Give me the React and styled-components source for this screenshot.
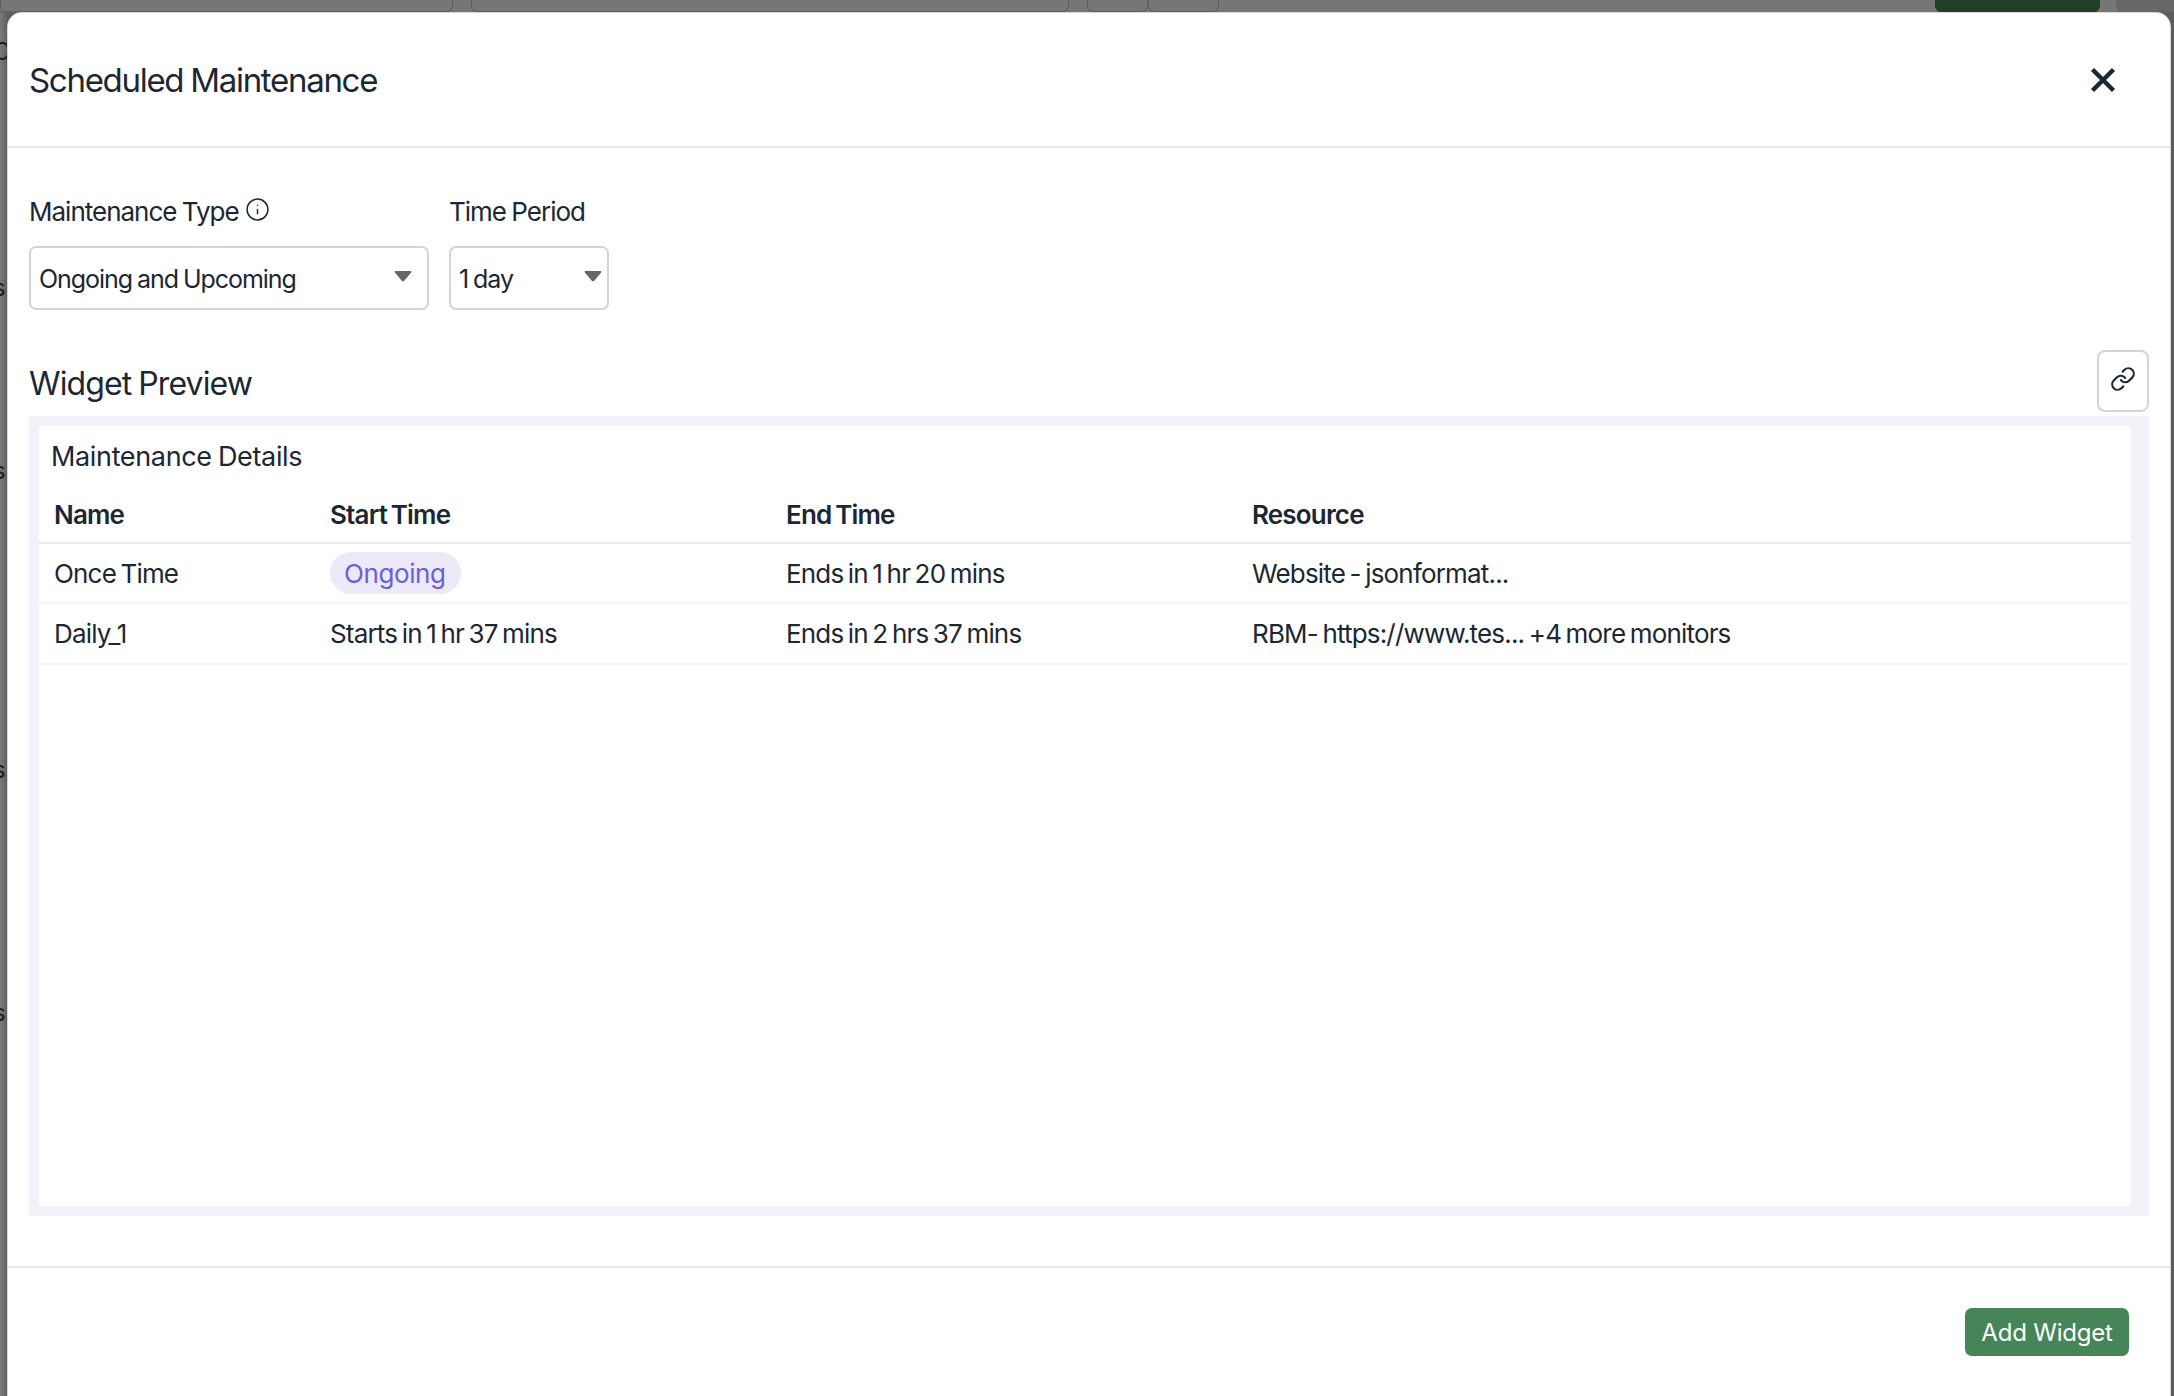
import styled, { createGlobalStyle } from "styled-components";
import { Info, Link } from "lucide-react";

const Global = createGlobalStyle`
  html, body {
    margin: 0;
    padding: 0;
    height: 100%;
    overflow: hidden;
  }
  body {
    font-family: Inter, "Noto Sans", sans-serif;
    color: #1c2733;
  }
`;

const Page = styled.div`
  position: relative;
  width: 2174px;
  height: 1396px;
  overflow: hidden;
  background: linear-gradient(90deg, #7a7a7a 0, #5c5c5c 8px);
`;

const TopStrip = styled.div`
  display: flex;
  height: 12px;
  background: #767676;
  border-bottom: 1px solid #606060;
`;

const BackField = styled.div`
  width: ${(p) => p.$w}px;
  margin-left: ${(p) => p.$ml}px;
  height: 12px;
  box-sizing: border-box;
  border: 1px solid #5f5f5f;
  border-top: none;
  border-radius: 0 0 6px 6px;
`;

const BackButton = styled.div`
  width: 165px;
  margin-left: ${(p) => p.$ml}px;
  height: 12px;
  background: #213f27;
  border-radius: 0 0 6px 6px;
`;

const BackGray = styled.div`
  flex: 1;
  margin-left: 16px;
  background: #676767;
  border-radius: 0 0 0 6px;
`;

const EdgeLetter = styled.span`
  position: absolute;
  left: -7px;
  top: ${(p) => p.$top}px;
  font-size: 24px;
  line-height: 24px;
  color: #1d1d1d;
`;

const Modal = styled.div`
  position: absolute;
  left: 8px;
  top: 13px;
  width: 2162px;
  height: 1400px;
  background: #fff;
  border-radius: 14px;
  box-shadow: 0 0 0 1px #d8d8d8;
  display: flex;
  flex-direction: column;
`;

const Header = styled.div`
  height: 135px;
  flex: none;
  box-sizing: border-box;
  border-bottom: 2px solid #e8e8ee;
  display: flex;
  align-items: center;
  justify-content: space-between;
  padding: 0 54px 0 21px;
`;

const Title = styled.h1`
  margin: 0;
  font-size: 33px;
  font-weight: 400;
  letter-spacing: -1.3px;
  word-spacing: -1px;
`;

const CloseButton = styled.button`
  border: none;
  background: none;
  padding: 0;
  width: 26px;
  height: 26px;
  display: flex;
  color: #1c2733;
`;

const Body = styled.div`
  flex: none;
  height: 1120px;
  box-sizing: border-box;
  border-bottom: 2px solid #e8e8ee;
  padding: 0 21px;
`;

const Filters = styled.div`
  display: flex;
  gap: 20px;
  padding-top: 47px;
`;

const FilterGroup = styled.div`
  display: flex;
  flex-direction: column;
  gap: 19px;
`;

const Label = styled.label`
  display: flex;
  align-items: center;
  gap: 6px;
  height: 32px;
  font-size: 26px;
  letter-spacing: -1px;
  word-spacing: -1px;
  svg {
    margin-top: -4px;
  }
`;

const Select = styled.div`
  width: ${(p) => p.$w}px;
  height: 64px;
  box-sizing: border-box;
  border: 2px solid #d3d5da;
  border-radius: 7px;
  padding: 2px ${(p) => p.$pr}px 0 8px;
  display: flex;
  align-items: center;
  justify-content: space-between;
  font-size: 25px;
  letter-spacing: -1.05px;
  word-spacing: -1px;
`;

const Arrow = styled.svg`
  width: 18px;
  height: 12px;
  margin-top: -6px;
  fill: #666;
`;

const PreviewHead = styled.div`
  display: flex;
  align-items: flex-end;
  justify-content: space-between;
  margin-top: 40px;
  height: 62px;
`;

const PreviewTitle = styled.h2`
  margin: 0 0 9px;
  font-size: 32px;
  font-weight: 400;
  letter-spacing: -0.9px;
  word-spacing: -1px;
`;

const LinkButton = styled.button`
  width: 52px;
  height: 62px;
  box-sizing: border-box;
  background: #fff;
  border: 2px solid #d3d5da;
  border-radius: 8px;
  padding: 0 0 4px;
  display: flex;
  align-items: center;
  justify-content: center;
  color: #1c2733;
`;

const Panel = styled.div`
  margin-top: 4px;
  height: 800px;
  box-sizing: border-box;
  background: #f3f2f8;
  padding: 10px 18px 10px 10px;
`;

const PanelInner = styled.div`
  height: 100%;
  background: #fff;
  border-radius: 3px;
`;

const PanelTitle = styled.div`
  height: 60px;
  padding-left: 12px;
  display: flex;
  align-items: center;
  font-size: 27px;
  letter-spacing: -0.35px;
  word-spacing: -1px;
`;

const Row = styled.div`
  display: grid;
  grid-template-columns: 276px 456px 466px 1fr;
  align-items: center;
  height: ${(p) => p.$h}px;
  box-sizing: border-box;
  padding-left: 15px;
  border-bottom: 2px solid ${(p) => p.$line};
  font-size: 26px;
  letter-spacing: -0.82px;
  word-spacing: -2px;
  font-weight: ${(p) => (p.$head ? 600 : 400)};
`;

const Pill = styled.span`
  display: inline-flex;
  align-items: center;
  height: 42px;
  padding: 0 15px 0 14px;
  border-radius: 21px;
  background: #ece9f9;
  color: #6a5fdc;
  letter-spacing: -0.4px;
`;

const Footer = styled.div`
  display: flex;
  justify-content: flex-end;
  padding: 40px 41px 0 0;
`;

const AddButton = styled.button`
  width: 164px;
  height: 48px;
  border: none;
  border-radius: 7px;
  background: #458557;
  color: #fff;
  font-family: Inter, sans-serif;
  font-size: 24px;
  font-weight: 400;
  letter-spacing: -0.2px;
  padding: 0;
`;

const SelectArrow = () => (
  <Arrow viewBox="0 0 18 12">
    <path d="M1.500 1h15c.8 0 1.200.9.700 1.500L10 11c-.5.600-1.500.600-2 0L.8 2.500C.3 1.900.7 1 1.500 1z" />
  </Arrow>
);

export default function App() {
  return (
    <Page>
      <Global />
      <TopStrip>
        <BackField $w={453} $ml={0} />
        <BackField $w={598} $ml={18} />
        <BackField $w={61} $ml={18} />
        <BackField $w={71} $ml={0} />
        <BackButton $ml={716} />
        <BackGray />
      </TopStrip>
      <EdgeLetter $top={40}>C</EdgeLetter>
      <EdgeLetter $top={276}>s</EdgeLetter>
      <EdgeLetter $top={459}>s</EdgeLetter>
      <EdgeLetter $top={758}>s</EdgeLetter>
      <EdgeLetter $top={1001}>s</EdgeLetter>
      <Modal>
        <Header>
          <Title>Scheduled Maintenance</Title>
          <CloseButton>
            <svg width="26" height="26" viewBox="0 0 26 26" fill="none">
              <path d="M2.500 2.500l21 21M23.500 2.500l-21 21" stroke="currentColor" strokeWidth="4.500" />
            </svg>
          </CloseButton>
        </Header>
        <Body>
          <Filters>
            <FilterGroup>
              <Label>
                Maintenance Type <Info size={25} strokeWidth={1.4} />
              </Label>
              <Select $w={400} $pr={15}>
                Ongoing and Upcoming
                <SelectArrow />
              </Select>
            </FilterGroup>
            <FilterGroup>
              <Label>Time Period</Label>
              <Select $w={160} $pr={5}>
                1 day
                <SelectArrow />
              </Select>
            </FilterGroup>
          </Filters>
          <PreviewHead>
            <PreviewTitle>Widget Preview</PreviewTitle>
            <LinkButton>
              <Link size={26} strokeWidth={2} />
            </LinkButton>
          </PreviewHead>
          <Panel>
            <PanelInner>
              <PanelTitle>Maintenance Details</PanelTitle>
              <Row $head $h={58} $line="#e8e8ee">
                <span>Name</span>
                <span>Start Time</span>
                <span>End Time</span>
                <span>Resource</span>
              </Row>
              <Row $h={60} $line="#f5f5f7">
                <span>Once Time</span>
                <span>
                  <Pill>Ongoing</Pill>
                </span>
                <span>Ends in 1 hr 20 mins</span>
                <span>Website - jsonformat...</span>
              </Row>
              <Row $h={61} $line="#f5f5f7">
                <span>Daily_1</span>
                <span>Starts in 1 hr 37 mins</span>
                <span>Ends in 2 hrs 37 mins</span>
                <span>RBM- https://www.tes... +4 more monitors</span>
              </Row>
            </PanelInner>
          </Panel>
        </Body>
        <Footer>
          <AddButton>Add Widget</AddButton>
        </Footer>
      </Modal>
    </Page>
  );
}
